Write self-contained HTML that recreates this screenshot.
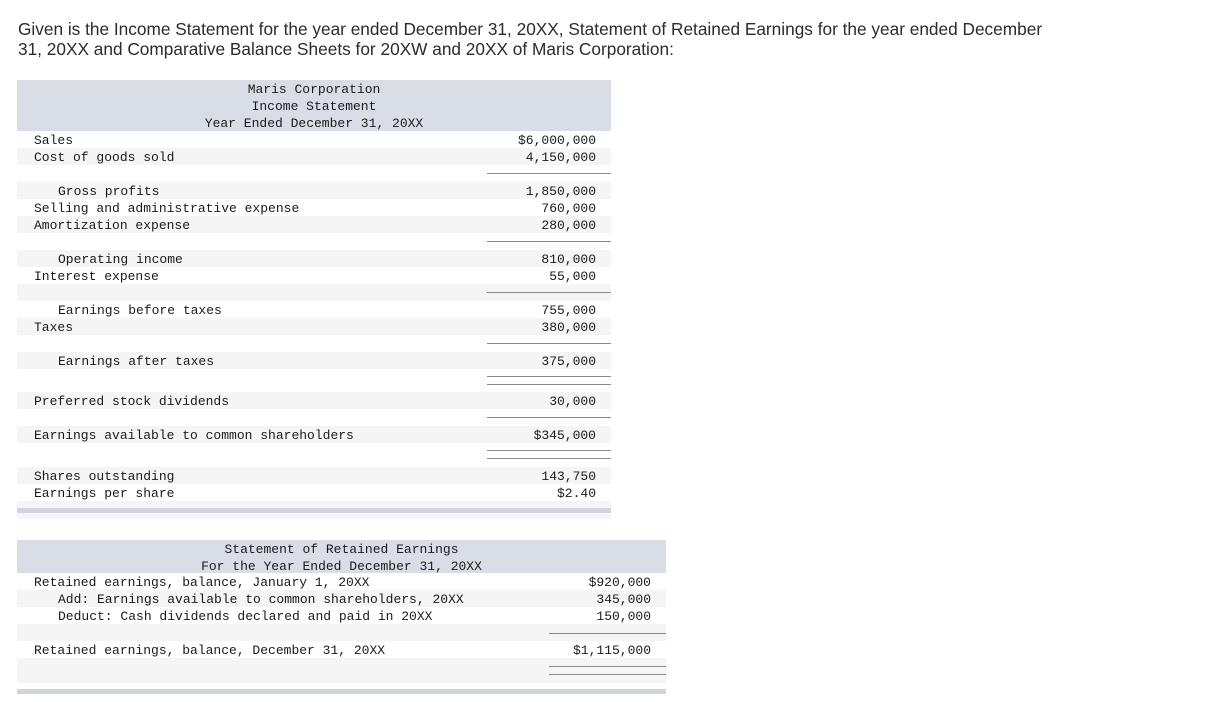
<!DOCTYPE html>
<html><head><meta charset="utf-8"><style>
body{margin:0;width:1206px;height:702px;background:#fff;position:relative;overflow:hidden}
.p{position:absolute;left:18px;font:17.25px "Liberation Sans",sans-serif;color:#2b2b2b;white-space:nowrap;line-height:20px}
.b{position:absolute}
.t{position:absolute;font:13px "Liberation Mono",monospace;color:#1a1a1a;white-space:nowrap;line-height:17px;margin-top:1px}
.r{text-align:right}
.c{text-align:center}
.l{position:absolute;height:1px;background:#8a8a8a}
</style></head><body>
<div class="p" style="top:19px">Given is the Income Statement for the year ended December 31, 20XX, Statement of Retained Earnings for the year ended December</div>
<div class="p" style="top:39px">31, 20XX and Comparative Balance Sheets for 20XW and 20XX of Maris Corporation:</div>

<div class="b" style="left:17px;top:80px;width:594px;height:51px;background:#d9dde6"></div>
<div class="b" style="left:17px;top:148px;width:594px;height:17px;background:#f5f5f5"></div>
<div class="b" style="left:17px;top:182px;width:594px;height:17px;background:#f5f5f5"></div>
<div class="b" style="left:17px;top:216px;width:594px;height:17px;background:#f5f5f5"></div>
<div class="b" style="left:17px;top:250px;width:594px;height:17px;background:#f5f5f5"></div>
<div class="b" style="left:17px;top:284px;width:594px;height:17px;background:#f5f5f5"></div>
<div class="b" style="left:17px;top:318px;width:594px;height:17px;background:#f5f5f5"></div>
<div class="b" style="left:17px;top:352px;width:594px;height:17px;background:#f5f5f5"></div>
<div class="b" style="left:17px;top:392px;width:594px;height:17px;background:#f5f5f5"></div>
<div class="b" style="left:17px;top:426px;width:594px;height:17px;background:#f5f5f5"></div>
<div class="b" style="left:17px;top:467px;width:594px;height:17px;background:#f5f5f5"></div>
<div class="b" style="left:17px;top:501px;width:594px;height:7px;background:#f5f5f5"></div>
<div class="b" style="left:17px;top:508px;width:594px;height:5px;background:#cfd5df"></div>
<div class="b" style="left:17px;top:513px;width:594px;height:6px;background:#f5f5f5"></div>

<div class="t c" style="left:17px;width:594px;top:80px">Maris Corporation</div>
<div class="t c" style="left:17px;width:594px;top:97px">Income Statement</div>
<div class="t c" style="left:17px;width:594px;top:114px">Year Ended December 31, 20XX</div>

<div class="t" style="left:34px;top:131px">Sales</div><div class="t r" style="left:450px;width:146px;top:131px">$6,000,000</div>
<div class="t" style="left:34px;top:148px">Cost of goods sold</div><div class="t r" style="left:450px;width:146px;top:148px">4,150,000</div>
<div class="l" style="left:487px;width:124px;top:173px"></div>
<div class="t" style="left:58px;top:182px">Gross profits</div><div class="t r" style="left:450px;width:146px;top:182px">1,850,000</div>
<div class="t" style="left:34px;top:199px">Selling and administrative expense</div><div class="t r" style="left:450px;width:146px;top:199px">760,000</div>
<div class="t" style="left:34px;top:216px">Amortization expense</div><div class="t r" style="left:450px;width:146px;top:216px">280,000</div>
<div class="l" style="left:487px;width:124px;top:241px"></div>
<div class="t" style="left:58px;top:250px">Operating income</div><div class="t r" style="left:450px;width:146px;top:250px">810,000</div>
<div class="t" style="left:34px;top:267px">Interest expense</div><div class="t r" style="left:450px;width:146px;top:267px">55,000</div>
<div class="l" style="left:487px;width:124px;top:292px"></div>
<div class="t" style="left:58px;top:301px">Earnings before taxes</div><div class="t r" style="left:450px;width:146px;top:301px">755,000</div>
<div class="t" style="left:34px;top:318px">Taxes</div><div class="t r" style="left:450px;width:146px;top:318px">380,000</div>
<div class="l" style="left:487px;width:124px;top:343px"></div>
<div class="t" style="left:58px;top:352px">Earnings after taxes</div><div class="t r" style="left:450px;width:146px;top:352px">375,000</div>
<div class="l" style="left:487px;width:124px;top:376px"></div>
<div class="l" style="left:487px;width:124px;top:384px"></div>
<div class="t" style="left:34px;top:392px">Preferred stock dividends</div><div class="t r" style="left:450px;width:146px;top:392px">30,000</div>
<div class="l" style="left:487px;width:124px;top:417px"></div>
<div class="t" style="left:34px;top:426px">Earnings available to common shareholders</div><div class="t r" style="left:450px;width:146px;top:426px">$345,000</div>
<div class="l" style="left:487px;width:124px;top:450px"></div>
<div class="l" style="left:487px;width:124px;top:458px"></div>
<div class="t" style="left:34px;top:467px">Shares outstanding</div><div class="t r" style="left:450px;width:146px;top:467px">143,750</div>
<div class="t" style="left:34px;top:484px">Earnings per share</div><div class="t r" style="left:450px;width:146px;top:484px">$2.40</div>

<div class="b" style="left:17px;top:540px;width:649px;height:33px;background:#d9dde6"></div>
<div class="b" style="left:17px;top:590px;width:649px;height:17px;background:#f5f5f5"></div>
<div class="b" style="left:17px;top:624px;width:649px;height:17px;background:#f5f5f5"></div>
<div class="b" style="left:17px;top:658px;width:649px;height:25px;background:#f5f5f5"></div>
<div class="b" style="left:17px;top:689px;width:649px;height:5px;background:#cfd5df"></div>
<div class="t c" style="left:17px;width:649px;top:540px">Statement of Retained Earnings</div>
<div class="t c" style="left:17px;width:649px;top:557px">For the Year Ended December 31, 20XX</div>
<div class="t" style="left:34px;top:573px">Retained earnings, balance, January 1, 20XX</div><div class="t r" style="left:500px;width:151px;top:573px">$920,000</div>
<div class="t" style="left:58px;top:590px">Add: Earnings available to common shareholders, 20XX</div><div class="t r" style="left:500px;width:151px;top:590px">345,000</div>
<div class="t" style="left:58px;top:607px">Deduct: Cash dividends declared and paid in 20XX</div><div class="t r" style="left:500px;width:151px;top:607px">150,000</div>
<div class="l" style="left:549px;width:117px;top:633px"></div>
<div class="t" style="left:34px;top:641px">Retained earnings, balance, December 31, 20XX</div><div class="t r" style="left:500px;width:151px;top:641px">$1,115,000</div>
<div class="l" style="left:549px;width:117px;top:666px"></div>
<div class="l" style="left:549px;width:117px;top:674px"></div>
</body></html>
